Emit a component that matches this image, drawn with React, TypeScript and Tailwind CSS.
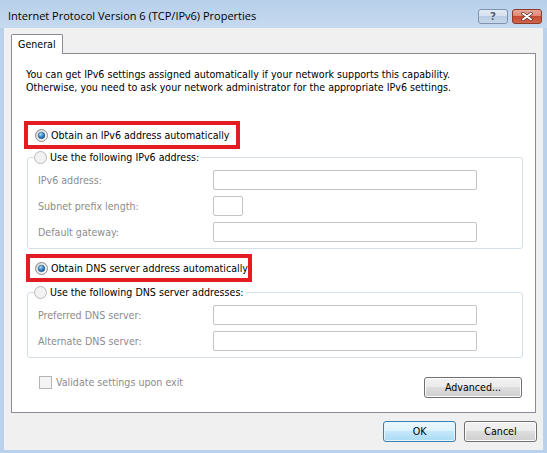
import React from "react";

const body = "font-['DejaVu_Sans_Condensed','DejaVu_Sans',sans-serif] text-[10.6px] leading-[13px] whitespace-nowrap";

function Radio({ checked, disabled }: { checked?: boolean; disabled?: boolean }) {
  return (
    <svg width="13" height="13" viewBox="0 0 13 13" className="shrink-0">
      <defs>
        <linearGradient id="rf" x1="0" y1="0" x2="1" y2="1">
          <stop offset="0" stopColor="#d4d4d4" />
          <stop offset="1" stopColor="#ffffff" />
        </linearGradient>
        <radialGradient id="rd" cx="0.35" cy="0.3" r="0.75">
          <stop offset="0" stopColor="#b7e3fb" />
          <stop offset="0.5" stopColor="#3a8fd0" />
          <stop offset="1" stopColor="#1b4f85" />
        </radialGradient>
      </defs>
      <circle
        cx="6.5"
        cy="6.5"
        r="6"
        fill={disabled ? "#f2f2f2" : "url(#rf)"}
        stroke={disabled ? "#b8b8b8" : "#8a8a8a"}
      />
      {checked && <circle cx="6.5" cy="6.5" r="3.3" fill="url(#rd)" stroke="#2a5c8c" strokeWidth="0.6" />}
    </svg>
  );
}

function Field({ label, small }: { label: string; small?: boolean }) {
  return (
    <div className="flex items-center h-[20px]">
      <span className="w-[175px] text-[#8c8c8c]">{label}</span>
      <div
        className={`h-[20px] ${small ? "w-[30px]" : "w-[264px]"} border border-[#c4c4c4] rounded-[2px] bg-white`}
      ></div>
    </div>
  );
}

function WinButton({ label, primary, width }: { label: string; primary?: boolean; width: string }) {
  return (
    <button
      className={`${width} h-[21px] rounded-[3px] border ${
        primary
          ? "border-[#3c7fb1] bg-[linear-gradient(to_bottom,#ecf7fd_0%,#dcf1fc_50%,#c4e8fc_50%,#a9daf5_100%)] shadow-[inset_0_0_0_1px_#e3f4fc]"
          : "border-[#707070] bg-[linear-gradient(to_bottom,#f2f2f2_0%,#ebebeb_50%,#dddddd_50%,#cfcfcf_100%)] shadow-[inset_0_0_0_1px_#fcfcfc]"
      } text-black flex items-center justify-center`}
    >
      {label}
    </button>
  );
}

export default function App() {
  return (
    <div className={`w-[547px] h-[453px] bg-[#b9d1ea] flex flex-col ${body}`}>
      {/* title bar */}
      <div className="h-[28px] flex items-start bg-linear-to-b from-[#b7cfe9] to-[#c6daf0]">
        <span className="mt-[8px] ml-[8px] font-['Open_Sans',sans-serif] text-[11px] leading-[15px] text-black">
          Internet Protocol Version 6 (TCP/IPv6) Properties
        </span>
        <div className="ml-auto mt-[9px] mr-[5px] flex gap-[4px]">
          <div className="w-[30px] h-[15px] rounded-[3px] border border-[#7d93b0] bg-[linear-gradient(to_bottom,#e2ebf5_0%,#d2e0ef_50%,#b8cce3_50%,#c7d8ea_100%)] flex items-center justify-center">
            <span className="font-['DejaVu_Sans',sans-serif] font-bold text-[11px] leading-[11px] text-[#4b5d73] [text-shadow:0_0_1px_#fff,0_0_1px_#fff]">
              ?
            </span>
          </div>
          <div className="w-[30px] h-[15px] rounded-[3px] border border-[#8d3a2b] bg-[linear-gradient(to_bottom,#e9a799_0%,#dc8572_50%,#c64a31_50%,#d0654c_100%)] flex items-center justify-center">
            <svg width="12" height="9" viewBox="0 0 12 9">
              <path d="M2 1.5 L10 7.5 M10 1.5 L2 7.5" stroke="#5a2a22" strokeWidth="3.4" strokeLinecap="round" />
              <path d="M2 1.5 L10 7.5 M10 1.5 L2 7.5" stroke="#ffffff" strokeWidth="2" strokeLinecap="round" />
            </svg>
          </div>
        </div>
      </div>

      {/* client area */}
      <div className="mx-[4px] mb-[3px] flex-1 bg-[#f0f0f0] flex flex-col">
        <div className="pt-[6px] pl-[7px]">
          <div className="relative z-10 -mb-px w-[52px] h-[20px] bg-white border border-b-0 border-[#898c95] rounded-t-[2px] pl-[6px] pt-[3px]">
            General
          </div>
        </div>

        {/* tab panel */}
        <div className="mx-[7px] h-[360px] bg-white border border-[#898c95] flex flex-col">
          <p className="mt-[14px] ml-[14px] text-black">
            You can get IPv6 settings assigned automatically if your network supports this capability.
            <br />
            Otherwise, you need to ask your network administrator for the appropriate IPv6 settings.
          </p>

          <div className="mt-[27px] ml-[12px] w-[216px] h-[28px] border-[4px] border-[#e31b23] flex items-center pl-[7px] gap-[3px]">
            <Radio checked />
            <span>Obtain an IPv6 address automatically</span>
          </div>

          <fieldset className="mt-[1px] ml-[15px] w-[496px] border border-[#d5dfe5] rounded-[3px] pl-[10px] pt-[6px] pb-[6px]">
            <legend className="ml-[-4px] pr-[2px] flex items-center gap-[3px] h-[14px]">
              <Radio disabled />
              <span>Use the following IPv6 address:</span>
            </legend>
            <div className="flex flex-col gap-[6px]">
              <Field label="IPv6 address:" />
              <Field label="Subnet prefix length:" small />
              <Field label="Default gateway:" />
            </div>
          </fieldset>

          <div className="mt-[5px] ml-[14px] w-[226px] h-[28px] border-[4px] border-[#e31b23] flex items-center pl-[5px] gap-[3px]">
            <Radio checked />
            <span>Obtain DNS server address automatically</span>
          </div>

          <fieldset className="mt-[3px] ml-[15px] w-[496px] border border-[#d5dfe5] rounded-[3px] pl-[10px] pt-[6px] pb-[6px]">
            <legend className="ml-[-4px] pr-[2px] flex items-center gap-[3px] h-[14px]">
              <Radio disabled />
              <span>Use the following DNS server addresses:</span>
            </legend>
            <div className="flex flex-col gap-[6px]">
              <Field label="Preferred DNS server:" />
              <Field label="Alternate DNS server:" />
            </div>
          </fieldset>

          <div className="mt-[18px] ml-[27px] mr-[13px] flex items-start justify-between">
            <div className="flex items-center gap-[4px] h-[13px]">
              <div className="w-[13px] h-[13px] border border-[#b5b5b5] bg-[#f4f4f4]"></div>
              <span className="text-[#8c8c8c]">Validate settings upon exit</span>
            </div>
            <div className="mt-[1px]">
              <WinButton label="Advanced..." width="w-[98px]" />
            </div>
          </div>
        </div>

        {/* dialog buttons */}
        <div className="mt-[8px] mr-[6px] flex justify-end gap-[8px]">
          <WinButton label="OK" primary width="w-[73px]" />
          <WinButton label="Cancel" width="w-[73px]" />
        </div>
      </div>
    </div>
  );
}
